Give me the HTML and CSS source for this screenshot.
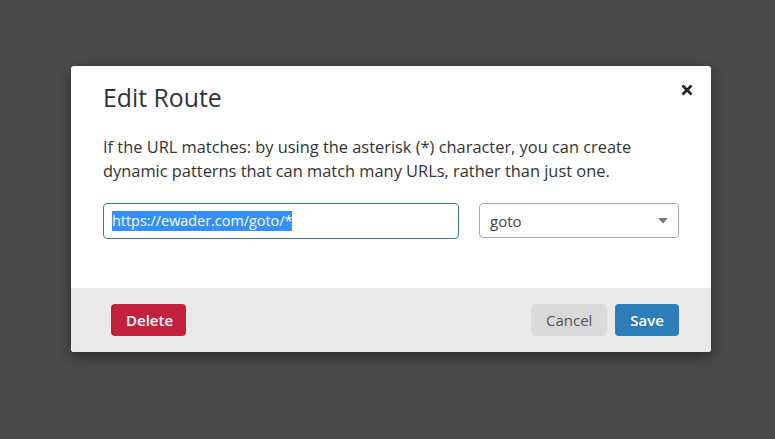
FILE: index.html
```html
<!DOCTYPE html>
<html>
<head>
<meta charset="utf-8">
<link rel="stylesheet" href="styles.css">
</head>
<body>
<div class="overlay">
  <div class="modal">
    <div class="modal-body">
      <div class="header">
        <h2 class="title">Edit Route</h2>
        <span class="close">
          <svg width="12" height="12" viewBox="0 0 12 12"><path d="M1.5 1.5 L10.5 10.5 M10.5 1.5 L1.5 10.5" stroke="#222" stroke-width="2.6" stroke-linecap="butt"/></svg>
        </span>
      </div>
      <p class="desc">If the URL matches: by using the asterisk (*) character, you can create dynamic patterns that can match many URLs, rather than just one.</p>
      <div class="fields">
        <div class="input"><span class="sel">https://ewader.com/goto/*</span></div>
        <div class="select">
          <span>goto</span>
          <svg width="10" height="6" viewBox="0 0 10 6"><path d="M0 0 H10 L5 5.5 Z" fill="#777"/></svg>
        </div>
      </div>
    </div>
    <div class="footer">
      <button class="btn btn-delete">Delete</button>
      <div class="right">
        <button class="btn btn-cancel">Cancel</button>
        <button class="btn btn-save">Save</button>
      </div>
    </div>
  </div>
</div>
</body>
</html>
```
FILE: styles.css
```css
html, body {
  margin: 0;
  padding: 0;
  height: 100%;
}
body {
  background: #4a4a4a;
  font-family: "Open Sans", "Noto Sans", sans-serif;
  color: #333;
}
.overlay {
  padding-top: 66px;
  padding-left: 71px;
}
.modal {
  width: 640px;
  background: #fff;
  border-radius: 3px;
  box-shadow: 0 4px 14px rgba(0,0,0,0.45);
  overflow: hidden;
}
.modal-body {
  padding: 15px 32px 49px 32px;
}
.header {
  display: flex;
  justify-content: space-between;
  align-items: flex-start;
}
.title {
  margin: 0;
  font-weight: 400;
  font-size: 24.8px;
  line-height: 32px;
  color: #333;
}
.close {
  margin-top: 3px;
  margin-right: -14px;
  display: flex;
}
.desc {
  margin: 22px 0 0 0;
  font-size: 16.4px;
  line-height: 24px;
  color: #333;
}
.fields {
  display: flex;
  gap: 20px;
  margin-top: 20px;
}
.input {
  box-sizing: border-box;
  width: 356px;
  height: 36px;
  border: 1px solid #3b7d98;
  border-radius: 4px;
  padding: 0 8px;
  display: flex;
  align-items: center;
  font-size: 14.4px;
}
.sel {
  background: #3390ff;
  color: #fff;
  line-height: 20px;
}
.select {
  box-sizing: border-box;
  width: 200px;
  height: 35px;
  border: 1px solid #aaa;
  border-radius: 4px;
  padding: 0 10px 0 10px;
  display: flex;
  align-items: center;
  justify-content: space-between;
  font-size: 15px;
  color: #444;
}
.footer {
  background: #e9e9e9;
  height: 64px;
  box-sizing: border-box;
  padding: 16px 32px 16px 40px;
  display: flex;
  justify-content: space-between;
  align-items: center;
}
.right {
  display: flex;
  gap: 8px;
}
.btn {
  font-family: "Open Sans", "Noto Sans", sans-serif;
  font-size: 15px;
  height: 32px;
  border: none;
  border-radius: 4px;
  padding: 0 15px;
  cursor: pointer;
}
.btn-delete {
  background: #c4213f;
  color: #fff;
  font-weight: 600;
  width: 75px;
}
.btn-cancel {
  background: #d9d9d9;
  color: #555;
  width: 76px;
}
.btn-save {
  background: #2f7db8;
  color: #fff;
  font-weight: 600;
  width: 64px;
}
```
